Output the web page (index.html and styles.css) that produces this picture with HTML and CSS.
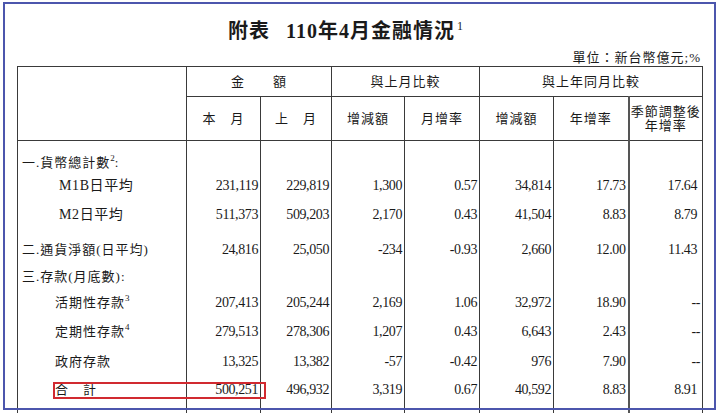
FILE: index.html
```html
<!DOCTYPE html>
<html lang="zh-Hant">
<head>
<meta charset="utf-8">
<title>附表 110年4月金融情況</title>
<link rel="stylesheet" href="styles.css">
</head>
<body>
<div class="page">
  <h1 class="title"><span>附表</span><span class="title-main">110年4月金融情況</span><sup class="title-note">1</sup></h1>
  <div class="unit">單位：新台幣億元;%</div>
  <table class="fin">
    <colgroup>
      <col class="c-label"><col class="c74"><col class="c71"><col class="c73"><col class="c75"><col class="c74"><col class="c75"><col class="c74">
    </colgroup>
    <thead>
      <tr class="h1">
        <th rowspan="2"></th>
        <th colspan="2">金　　額</th>
        <th colspan="2">與上月比較</th>
        <th colspan="3">與上年同月比較</th>
      </tr>
      <tr class="h2">
        <th>本　月</th>
        <th>上　月</th>
        <th>增減額</th>
        <th>月增率</th>
        <th>增減額</th>
        <th>年增率</th>
        <th class="sa">季節調整後<br>年增率</th>
      </tr>
    </thead>
    <tbody>
      <tr class="r1">
        <td class="label">一.貨幣總計數<sup class="fn">2</sup>:</td>
        <td></td><td></td><td></td><td></td><td></td><td></td><td class="sa"></td>
      </tr>
      <tr class="r2">
        <td class="label sub-m">M1B日平均</td>
        <td>231,119</td><td>229,819</td><td>1,300</td><td>0.57</td><td>34,814</td><td>17.73</td><td class="sa">17.64</td>
      </tr>
      <tr class="r3">
        <td class="label sub-m">M2日平均</td>
        <td>511,373</td><td>509,203</td><td>2,170</td><td>0.43</td><td>41,504</td><td>8.83</td><td class="sa">8.79</td>
      </tr>
      <tr class="r4">
        <td class="label">二.通貨淨額(日平均)</td>
        <td>24,816</td><td>25,050</td><td>-234</td><td>-0.93</td><td>2,660</td><td>12.00</td><td class="sa">11.43</td>
      </tr>
      <tr class="r5">
        <td class="label">三.存款(月底數):</td>
        <td></td><td></td><td></td><td></td><td></td><td></td><td class="sa"></td>
      </tr>
      <tr class="r6">
        <td class="label sub">活期性存款<sup class="fn">3</sup></td>
        <td>207,413</td><td>205,244</td><td>2,169</td><td>1.06</td><td>32,972</td><td>18.90</td><td class="sa dash">--</td>
      </tr>
      <tr class="r7">
        <td class="label sub">定期性存款<sup class="fn">4</sup></td>
        <td>279,513</td><td>278,306</td><td>1,207</td><td>0.43</td><td>6,643</td><td>2.43</td><td class="sa dash">--</td>
      </tr>
      <tr class="r8">
        <td class="label sub">政府存款</td>
        <td>13,325</td><td>13,382</td><td>-57</td><td>-0.42</td><td>976</td><td>7.90</td><td class="sa dash">--</td>
      </tr>
      <tr class="r9">
        <td class="label sub">合　計</td>
        <td>500,251</td><td>496,932</td><td>3,319</td><td>0.67</td><td>40,592</td><td>8.83</td><td class="sa">8.91</td>
      </tr>
      <tr class="filler">
        <td></td><td></td><td></td><td></td><td></td><td></td><td></td><td class="sa"></td>
      </tr>
    </tbody>
  </table>
  <div class="highlight"></div>
</div>
<div class="frame"></div>
</body>
</html>
```

FILE: styles.css
```css
html, body {
  margin: 0;
  height: 100%;
  overflow: hidden;
  background: #ffffff;
}

body {
  font-family: "Liberation Serif", "Noto Sans CJK TC", serif;
  color: #1a1a1a;
}

.page {
  position: relative;
  padding: 19px 0 0 17px;
}

.title {
  margin: 0;
  padding-left: 211px;
  font-size: 20px;
  line-height: 24px;
  font-weight: 700;
  letter-spacing: 1px;
  white-space: nowrap;
}

.title-main {
  margin-left: 16px;
}

.title-note {
  font-size: 12px;
  font-weight: 400;
  line-height: 14px;
  vertical-align: top;
  margin-left: 2px;
}

.unit {
  box-sizing: border-box;
  width: 686px;
  margin-top: 7px;
  padding-right: 2px;
  text-align: right;
  font-size: 13px;
  line-height: 16px;
  letter-spacing: 1px;
}

.fin {
  border-collapse: collapse;
  table-layout: fixed;
  width: 686px;
}

.c-label { width: 169px; }
.c74 { width: 74px; }
.c71 { width: 71px; }
.c73 { width: 73px; }
.c75 { width: 75px; }

.fin th {
  border: 1px solid #3a3a3a;
  padding: 0;
  font-weight: 400;
  font-size: 13px;
  line-height: 14px;
  letter-spacing: 1px;
  text-align: center;
  vertical-align: middle;
  white-space: nowrap;
}

.h1 th { height: 29px; }
.h2 th { height: 43px; }

.fin td {
  border-left: 1px solid #3a3a3a;
  border-right: 1px solid #3a3a3a;
  padding: 0 2px 0 0;
  text-align: right;
  vertical-align: bottom;
  font-size: 14px;
  line-height: 18px;
  letter-spacing: -0.4px;
  white-space: nowrap;
}

.fin .sa {
  border-left: 2px solid #555555;
}

.fin td.sa {
  padding-right: 5px;
}

.fin td.dash {
  padding-right: 2px;
}

.fin td.label {
  text-align: left;
  padding-left: 4px;
  font-size: 13px;
  letter-spacing: 1px;
}

.fin td.sub-m {
  padding-left: 41px;
  font-size: 14px;
  letter-spacing: 0.6px;
}

.fin td.sub {
  padding-left: 37px;
}

.fn {
  font-size: 9px;
  line-height: 0;
  vertical-align: 6px;
  letter-spacing: 0;
}

.r1 td { height: 31px; }
.r2 td { height: 23px; }
.r3 td { height: 29px; }
.r4 td { height: 35px; }
.r5 td { height: 27px; }
.r6 td { height: 26px; }
.r7 td { height: 29px; }
.r8 td { height: 30px; }
.r9 td { height: 28px; }
.filler td { height: 20px; }

.highlight {
  position: absolute;
  left: 53px;
  top: 382px;
  width: 213px;
  height: 17px;
  box-sizing: border-box;
  border: 2px solid #d12a30;
}

.frame {
  position: absolute;
  left: 3px;
  top: 2px;
  width: 713px;
  height: 408px;
  box-sizing: border-box;
  border: 2px solid #4c56ad;
  pointer-events: none;
}
```
